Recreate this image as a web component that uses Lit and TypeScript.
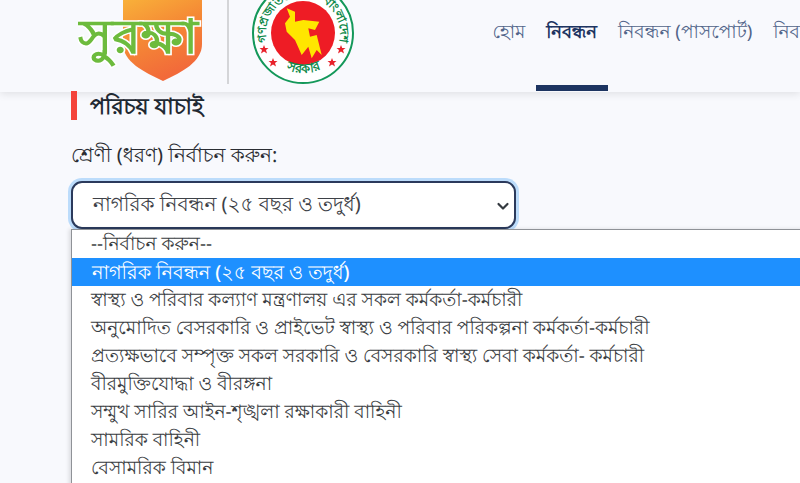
import { LitElement, html, css } from "lit";
import { customElement } from "lit/decorators.js";

const OPTIONS = [
  "--নির্বাচন করুন--",
  "নাগরিক নিবন্ধন (২৫ বছর ও তদুর্ধ)",
  "স্বাস্থ্য ও পরিবার কল্যাণ মন্ত্রণালয় এর সকল কর্মকর্তা-কর্মচারী",
  "অনুমোদিত বেসরকারি ও প্রাইভেট স্বাস্থ্য ও পরিবার পরিকল্পনা কর্মকর্তা-কর্মচারী",
  "প্রত্যক্ষভাবে সম্পৃক্ত সকল সরকারি ও বেসরকারি স্বাস্থ্য সেবা কর্মকর্তা- কর্মচারী",
  "বীরমুক্তিযোদ্ধা ও বীরঙ্গনা",
  "সম্মুখ সারির আইন-শৃঙ্খলা রক্ষাকারী বাহিনী",
  "সামরিক বাহিনী",
  "বেসামরিক বিমান",
];

@customElement("app-root")
export class AppRoot extends LitElement {
  static styles = css`
    :host {
      display: block;
      width: 800px;
      height: 483px;
      overflow: hidden;
      background: #f8f9fd;
      font-family: "Noto Sans", "DejaVu Sans", sans-serif;
      text-rendering: geometricPrecision;
      color: #22262b;
    }
    .header {
      height: 92px;
      display: flex;
      box-shadow: 0 2px 8px rgba(0, 0, 0, 0.1);
      padding-left: 78px;
      overflow: hidden;
      box-sizing: border-box;
      white-space: nowrap;
    }
    .logo { flex: none; width: 124px; height: 92px; }
    .logo text {
      font-size: 47px;
      font-weight: 800;
      fill: #6dbb3d;
      stroke: #fff;
      stroke-width: 3px;
      paint-order: stroke;
    }
    .sep { flex: none; width: 2px; height: 84px; margin-left: 25px; background: #d4d5d8; }
    .seal { flex: none; width: 108px; height: 92px; margin-left: 20px; }
    .seal text { font-size: 12px; font-weight: 600; fill: #0f8a4a; }
    .seal .bottom { font-size: 13px; }
    .navwrap { padding-left: 125px; display: flex; }
    .nav { display: flex; }
    .nav a {
      box-sizing: border-box;
      height: 91px;
      padding: 19px 10.4px 0;
      font-size: 18.6px;
      line-height: 26px;
      color: #52658a;
      border-bottom: 6px solid transparent;
    }
    .nav a.active { color: #1d3461; font-size: 18px; font-weight: 700; border-bottom-color: #1d3461; }
    .main { padding: 0 0 0 71px; position: relative; }
    .title {
      height: 29px;
      margin: -1px 0 0;
      padding-left: 13px;
      border-left: 6px solid #f4433a;
      font-size: 22.2px;
      line-height: 30px;
      font-weight: 700;
      color: #1f2933;
      position: relative;
    }
    .label { margin-top: 22px; font-size: 20px; line-height: 26px; height: 24px; color: #2a2d33; }
    .select {
      box-sizing: border-box;
      width: 445px;
      height: 48px;
      margin-top: 15px;
      padding: 2px 4px 0 20px;
      display: flex;
      align-items: center;
      justify-content: space-between;
      background: #fff;
      border: 2px solid #2b3a5c;
      border-radius: 11px;
      box-shadow: 0 0 0 3px #bcdcfb;
      font-size: 20px;
      color: #3d4147;
    }
    .menu {
      position: absolute;
      left: 71px;
      top: 138px;
      width: 740px;
      height: 300px;
      background: #fff;
      border: 1px solid #8f9297;
      box-shadow: -2px 0 4px rgba(0, 0, 0, 0.12);
      font-size: 18.7px;
      color: #3a3d42;
    }
    .opt { height: 28px; line-height: 27px; padding-left: 19px; white-space: nowrap; }
    .opt.sel { background: #1e90ff; color: #fff; font-size: 19.2px; font-weight: 500; padding-left: 20px; }
  `;

  render() {
    return html`
      <div class="header">
        <svg class="logo" viewBox="0 0 124 92">
          <defs>
            <linearGradient id="sh" x1="0" y1="0" x2="0.4" y2="1">
              <stop offset="0" stop-color="#f9b43a" />
              <stop offset="0.5" stop-color="#f58a35" />
              <stop offset="1" stop-color="#f26a3a" />
            </linearGradient>
          </defs>
          <path d="M45 -4 H124 V44 C124 62 104 72 85 81 C66 72 45 62 45 44 Z" fill="url(#sh)" />
          <text x="0" y="53" textLength="120" lengthAdjust="spacingAndGlyphs">সুরক্ষা</text>
        </svg>
        <div class="sep"></div>
        <svg class="seal" viewBox="0 0 108 92">
          <defs>
            <path id="arcT" d="M18 42 A37 37 0 1 1 90 42" fill="none" />
            <path id="arcB" d="M30 66 Q54 80 78 66" fill="none" />
          </defs>
          <circle cx="54" cy="33" r="50" fill="#fff" stroke="#14985a" stroke-width="2" />
          <circle cx="54" cy="33" r="32" fill="#ee1c25" />
          <path d="M37.7 8.3 L46 11.7 L46 21.7 L54.3 20 L70.3 21.7 L66 30 L59.3 28.3 L61 36.7 L67.7 35 L72.7 55 L67.7 50 L62.7 58.3 L59.3 46.7 L52.7 55 L46 40 L37.7 31.7 L36 23.3 L41 16.7 Z" fill="#ffe600" />
          <text><textPath href="#arcT">গণপ্রজাতন্ত্রী</textPath></text>
          <text text-anchor="end"><textPath href="#arcT" startOffset="100%">বাংলাদেশ</textPath></text>
          <text class="bottom"><textPath href="#arcB" startOffset="8">সরকার</textPath></text>
          <polygon points="15,45 16.2,48 19.5,48 17,50 18,53.5 15,51.5 12,53.5 13,50 10.5,48 13.8,48" fill="#e8222b" />
          <polygon points="24,58 25.2,61 28.5,61 26,63 27,66.5 24,64.5 21,66.5 22,63 19.5,61 22.8,61" fill="#e8222b" />
          <polygon points="92,45 93.2,48 96.5,48 94,50 95,53.5 92,51.5 89,53.5 90,50 87.5,48 90.8,48" fill="#e8222b" />
          <polygon points="83,58 84.2,61 87.5,61 85,63 86,66.5 83,64.5 80,66.5 81,63 78.5,61 81.8,61" fill="#e8222b" />
        </svg>
        <nav class="navwrap">
          <div class="nav">
            <a>হোম</a>
            <a class="active">নিবন্ধন</a>
            <a>নিবন্ধন (পাসপোর্ট)</a>
            <a>নিবন্ধন</a>
          </div>
        </nav>
      </div>
      <div class="main">
        <div class="title">পরিচয় যাচাই</div>
        <div class="label">শ্রেণী (ধরণ) নির্বাচন করুন:</div>
        <div class="select">
          <span>${OPTIONS[1]}</span>
          <svg width="14" height="14" viewBox="0 0 14 14" fill="none" stroke="#343a40" stroke-width="2.2" stroke-linecap="round" stroke-linejoin="round"><path d="M2.5 5 L7 9.5 L11.5 5" /></svg>
        </div>
        <div class="menu">
          ${OPTIONS.map((o, i) => html`<div class="opt ${i === 1 ? "sel" : ""}">${o}</div>`)}
        </div>
      </div>
    `;
  }
}
